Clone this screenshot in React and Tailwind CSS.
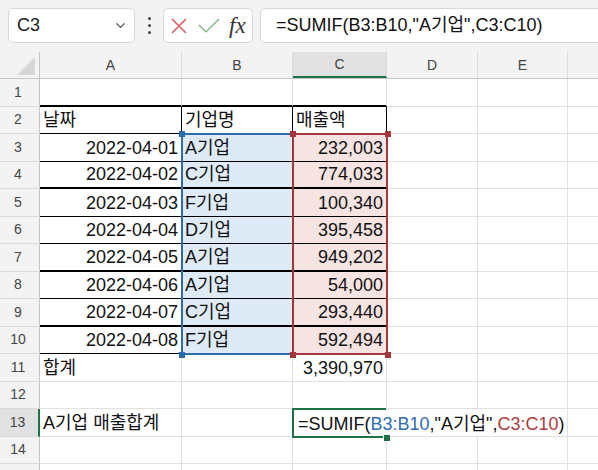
import { ChevronDown } from "lucide-react";

const rows = [
  ["2022-04-01", "A기업", "232,003"],
  ["2022-04-02", "C기업", "774,033"],
  ["2022-04-03", "F기업", "100,340"],
  ["2022-04-04", "D기업", "395,458"],
  ["2022-04-05", "A기업", "949,202"],
  ["2022-04-06", "A기업", "54,000"],
  ["2022-04-07", "C기업", "293,440"],
  ["2022-04-08", "F기업", "592,494"],
];

const colW = ["w-[142px]", "w-[111px]", "w-[94px]", "w-[91px]", "w-[90px]", "w-[40px]"];
const letters = ["A", "B", "C", "D", "E", ""];

function cellText(r, c) {
  if (r === 2) return [["날짜", "기업명", "매출액"][c] || "", "left"];
  if (r >= 3 && r <= 10) {
    const d = rows[r - 3];
    if (c === 0) return [d[0], "right"];
    if (c === 1) return [d[1], "left"];
    if (c === 2) return [d[2], "right"];
  }
  if (r === 11 && c === 0) return ["합계", "left"];
  if (r === 11 && c === 2) return ["3,390,970", "right"];
  if (r === 13 && c === 0) return ["A기업 매출합계", "left"];
  return ["", "left"];
}

function Cell({ r, c }) {
  const [text, align] = cellText(r, c);
  const inTable = r >= 2 && r <= 10 && c <= 2;
  const topOfTable = r === 1 && c <= 2;
  const thick = (r === 1 || r === 4 || r === 7 || r === 9) && c <= 2;
  const bottom = inTable || topOfTable ? "border-b-black" : "border-b-[#e1e1e1]";
  const right = inTable ? "border-r-black" : "border-r-[#e1e1e1]";
  let bg = "bg-white";
  if (r >= 3 && r <= 10 && c === 1) bg = "bg-[#deebf7]";
  if (r >= 3 && r <= 10 && c === 2) bg = "bg-[#f6e4e3]";
  return (
    <div
      className={`${colW[c]} shrink-0 h-full border-r ${thick ? "border-b-2" : "border-b"} ${bottom} ${right} ${bg} flex items-end pb-[3px] px-[3px] whitespace-nowrap leading-[20px] text-[18px] text-[#111] ${align === "right" ? "justify-end" : "justify-start"}`}
    >
      {text}
    </div>
  );
}

function Row({ r }) {
  const active = r === 13;
  return (
    <div className="flex h-[27.5px]">
      <div
        className={`w-[40px] shrink-0 h-full flex items-center justify-center pr-[3px] text-[14px] text-[#444] border-b border-b-[#dadada] ${active ? "bg-[#e1e1e1] border-r-2 border-r-[#1e7145]" : "bg-[#f3f3f3] border-r border-r-[#c6c6c6]"}`}
      >
        {r <= 14 ? r : ""}
      </div>
      {colW.map((_, c) => (
        <Cell key={c} r={r} c={c} />
      ))}
    </div>
  );
}

function Corner({ className }) {
  return <div className={`absolute w-[6px] h-[6px] ${className}`} />;
}

export default function App() {
  return (
    <div
      className="relative w-[598px] h-[470px] overflow-hidden bg-[#f3f3f3] text-[#111]"
      style={{ fontFamily: '"Liberation Sans", "Noto Sans CJK KR", sans-serif' }}
    >
      {/* toolbar */}
      <div className="flex h-[52px] pt-2 pl-2">
        <div className="w-[127px] h-[35px] shrink-0 rounded-[5px] border border-[#d8d8d8] bg-white flex items-center justify-between pl-[8px] pr-[6px]">
          <span className="text-[18px] text-[#222]">C3</span>
          <ChevronDown size={15} strokeWidth={1.8} className="text-[#444]" />
        </div>
        <div className="w-[28px] h-[35px] shrink-0 flex flex-col items-center justify-center gap-[4px]">
          <span className="w-[3px] h-[3px] rounded-full bg-[#444]" />
          <span className="w-[3px] h-[3px] rounded-full bg-[#444]" />
          <span className="w-[3px] h-[3px] rounded-full bg-[#444]" />
        </div>
        <div className="w-[90px] h-[35px] shrink-0 rounded-[5px] border border-[#d8d8d8] bg-white flex items-center pl-[5px]">
          <svg width="18" height="18" viewBox="0 0 18 18" className="ml-[1px]">
            <path d="M2 2 L16 16 M16 2 L2 16" stroke="#e0575b" strokeWidth="1.5" fill="none" />
          </svg>
          <svg width="22" height="16" viewBox="0 0 22 16" className="ml-[10px]">
            <path d="M1 7 L8 14 L21 1" stroke="#6fae79" strokeWidth="1.2" fill="none" />
          </svg>
          <span
            className="ml-[9px] text-[23px] italic text-[#333] leading-none"
            style={{ fontFamily: '"Liberation Serif", serif' }}
          >
            fx
          </span>
        </div>
        <div className="ml-[7px] w-[360px] h-[35px] shrink-0 rounded-[5px] border border-[#d8d8d8] bg-white flex items-center pl-[15px] text-[18px] text-[#111] whitespace-nowrap">
          =SUMIF(B3:B10,"A기업",C3:C10)
        </div>
      </div>

      {/* column headers */}
      <div className="flex h-[27px] border-b border-[#c6c6c6]">
        <div className="relative w-[40px] shrink-0 h-full border-r border-[#c6c6c6]">
          <svg width="18" height="18" viewBox="0 0 18 18" className="absolute right-[4px] bottom-[3px]">
            <polygon points="18,0 18,18 0,18" fill="#d6d6d6" />
          </svg>
        </div>
        {colW.map((w, c) => (
          <div
            key={c}
            className={`${w} shrink-0 h-full flex items-center justify-center text-[14px] text-[#444] border-r border-r-[#dcdcdc] ${c === 2 ? "bg-[#e1e1e1] border-b-2 border-b-[#1e7145]" : ""}`}
          >
            {letters[c]}
          </div>
        ))}
      </div>

      {/* grid */}
      <div>
        {Array.from({ length: 15 }, (_, i) => (
          <Row key={i} r={i + 1} />
        ))}
      </div>

      {/* reference range B3:B10 */}
      <div className="absolute left-[181px] top-[133px] w-[113px] h-[222px] border-2 border-[#2b6cb0]" />
      <Corner className="left-[179px] top-[131px] bg-[#2b6cb0]" />
      <Corner className="left-[179px] top-[352px] bg-[#2b6cb0]" />

      {/* reference range C3:C10 */}
      <div className="absolute left-[292px] top-[133px] w-[96px] h-[222px] border-2 border-[#a5373b]" />
      <Corner className="left-[290px] top-[131px] bg-[#a5373b]" />
      <Corner className="left-[385px] top-[131px] bg-[#a5373b]" />
      <Corner className="left-[290px] top-[352px] bg-[#a5373b]" />
      <Corner className="left-[385px] top-[352px] bg-[#a5373b]" />

      {/* editing cell C13 */}
      <div className="absolute left-[294px] top-[410px] w-[273px] h-[26px] bg-white flex items-end pb-[2px] pl-[4px] text-[18px] leading-[20px] whitespace-nowrap text-[#111]">
        =SUMIF(<span className="text-[#2f6db5]">B3:B10</span>,"A기업",<span className="text-[#b23a3e]">C3:C10</span>)
      </div>
      <div className="absolute left-[292px] top-[408px] w-[94px] h-[30px] border-2 border-r-0 border-[#1e7145]" />
      <div className="absolute left-[383px] top-[434px] w-[8px] h-[8px] bg-[#1e7145] border border-white" />
    </div>
  );
}
